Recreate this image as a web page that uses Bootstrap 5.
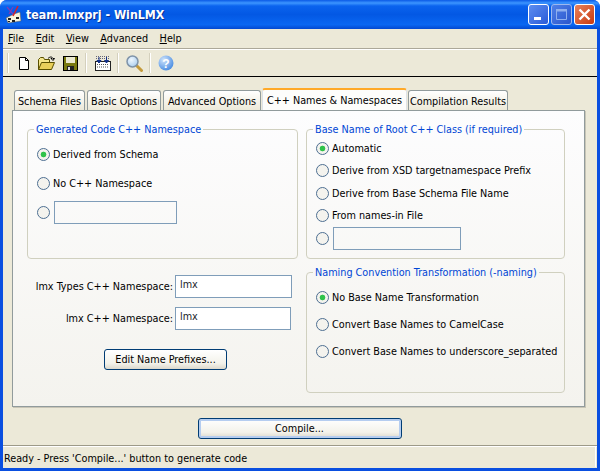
<!DOCTYPE html>
<html lang="en">

<head>
    <meta charset="UTF-8">
    <title>team.lmxprj - WinLMX</title>
    <link href="https://cdn.jsdelivr.net/npm/bootstrap@5.3.2/dist/css/bootstrap.min.css" rel="stylesheet">
    <style>
        html, body { height: 471px; overflow: hidden; }
        body { background: #fff; font: 10.75px/13px "DejaVu Sans Condensed", "DejaVu Sans", sans-serif; font-stretch: condensed; color: #000; }
        .xp-window { width: 600px; height: 471px; background: #0a4fe0; border-radius: 7px 7px 0 0; overflow: hidden; }
        .xp-title { height: 29px; padding: 0 5px; color: #fff;
            background: linear-gradient(180deg, #0a5ae6 0, #3c95ff 3px, #0a63ee 6px, #0358e4 50%, #0a67f2 85%, #0348d0 100%); }
        .xp-title-text { font: bold 12.3px "DejaVu Sans Condensed", "DejaVu Sans", sans-serif; font-stretch: condensed; text-shadow: 1px 1px 0 #0a2f90; }
        .xp-ctls { column-gap: 2px; }
        .xp-ctl { width: 21px; height: 21px; border: 1px solid #fff; border-radius: 3px; display: block; }
        .xp-ctl-min { background: linear-gradient(135deg, #5c8df0, #2a5bd8); }
        .xp-ctl-max { background: linear-gradient(135deg, #4f80e8, #2a56cc); border-color: #9db8ee; }
        .xp-ctl-close { background: linear-gradient(135deg, #e8825c, #c8390f); }
        .xp-body { margin: 0 3px 3px 3px; background: #ece9d8; height: 439px; }
        .xp-menu { height: 20px; border-bottom: 1px solid #aca899; box-shadow: 0 1px 0 #fff; }
        .xp-menu span { padding: 0 6.5px 0 5px; }
        .xp-menu u { text-underline-offset: 1px; }
        .xp-toolbar { height: 28px; padding-left: 4px; border-bottom: 1px solid #000; padding-top: 1px; }
        .xp-sep { width: 2px; height: 20px; background: #d4d0bd; border-right: 1px solid #fff; }
        .xp-tool-a { margin-left: 8px; }
        .xp-tool-b { margin-left: 7px; }
        .xp-sep.xp-tool-c { margin-left: 6px; }
        .xp-tabs { padding: 13px 0 0 11px; height: 33px; border: 0; }
        .xp-tabs .nav-link { height: 20px; margin: 0 2px 0 0; padding: 4px 0 0; text-align: center; color: #000; font-size: 10.75px; line-height: 13px; white-space: nowrap;
            background: linear-gradient(180deg, #fff, #ece9d8); border: 1px solid #919b9c; border-bottom: 0; border-radius: 3px 3px 0 0; }
        .xp-tabs .nav-link.active { height: 22px; margin: -2px 1px 0 -1px; padding: 4px 0 0; background: #fdfdfb; position: relative; z-index: 2;
            border-top: 2px solid #ffa928; color: #000; }
        .xp-tab-schema { width: 71px; }
        .xp-tab-basic { width: 74px; }
        .xp-tab-adv { width: 98px; }
        .xp-tab-cpp { width: 145px; }
        .xp-tab-comp { width: 100px; }
        .xp-panel { margin-left: 9px; width: 573px; height: 297px; border: 1px solid #919b9c; box-shadow: 1px 1px 0 #c8c5b6; column-gap: 8px;
            background: linear-gradient(180deg, #fdfdfe, #f4f3ee); padding: 12px 0 0 14px; }
        .xp-left { width: 271px; }
        .xp-right { width: 259px; }
        .xp-group { border: 1px solid #d0d0bf; border-radius: 4px; margin: 0; padding: 0; height: 136px; }
        .xp-group legend { float: none; width: auto; font-size: 10.75px; line-height: 13px; margin: 0 0 0 6px; padding: 0 2px; color: #0046d5; }
        .xp-group-naming { height: 127px; margin-top: 7px; }
        .xp-rows-ns { padding: 4px 0 0 9px; }
        .xp-rows-base { padding: 1px 0 0 9px; }
        .xp-rows-conv { padding: 4px 0 0 9px; }
        .xp-radio-row { height: 22.5px; }
        .xp-rows-ns .xp-radio-row { height: 29px; }
        .xp-rows-conv .xp-radio-row { height: 27px; }
        .xp-rows-conv .xp-radio-row:first-child { height: 28px; }
        .xp-radio { width: 13px; height: 13px; margin: 0 3px 0 0; flex: none; border: 1px solid #4e6f92; background-color: #f4f3ee; }
        .xp-radio:checked { background: radial-gradient(circle, #2fc24a 0 2.5px, #f4f3ee 3.2px); border-color: #4e6f92; }
        .xp-input { height: 23px; border: 1px solid #7f9db9; border-radius: 0; padding: 0 4px 4px; font-size: 10.75px; background: #fff; box-shadow: none; }
        .xp-radio + .xp-input { background: transparent; margin-left: 1px; }
        .xp-w123 { width: 123px; }
        .xp-w128 { width: 128px; }
        .xp-w117 { width: 117px; }
        .xp-w116 { width: 116px; }
        .xp-field { margin-top: 9px; }
        .xp-field-first { margin-top: 16px; }
        .xp-btn { border: 1px solid #003c74; border-radius: 3px; font-size: 10.75px; padding: 1px 0 0; color: #000; height: 21px;
            background: linear-gradient(180deg, #fff, #f3f2ea 70%, #dcd8cc); }
        .xp-btn-prefixes { width: 123px; margin: 19px 0 0 77px; }
        .xp-btn-compile { width: 204px; box-shadow: inset 0 0 0 2px #b5cdf0; }
        .xp-compile-row { padding: 11px 1px 0 0; height: 38px; }
        .xp-label { width: 148px; text-align: right; padding-right: 2px; }
        .xp-status { height: 22px; border-top: 1px solid #9d9a88; box-shadow: inset 0 1px 0 #fff; padding: 6px 0 0 1px; }
        .xp-status-pane { border-right: 1px solid #fff; height: 20px; margin: -5px 1px 0 0; padding-top: 5px; }
    </style>
</head>

<body>
    <div class="xp-window">
        <!-- Title bar -->
        <div class="xp-title d-flex align-items-center">
            <svg width="17" height="18" viewBox="0 0 17 18" class="me-1 flex-shrink-0">
                <path d="M1 12 L9 8 L15 6 L16 15 L3 17 Z" fill="#f7f3dc" stroke="#555" stroke-width=".5"/>
                <path d="M3 12h3v2H3zM7 14h3v2H7zM3 15h2v1H3zM11 11h3v2h-3z" fill="#222"/>
                <path d="M2 1 L8 8 M8 1 L4 8" stroke="#7a3fb8" stroke-width="1.3" fill="none"/>
                <path d="M13 0 L8 10" stroke="#d8202a" stroke-width="1.5"/>
            </svg>
            <span class="xp-title-text flex-grow-1">team.lmxprj - WinLMX</span>
            <div class="d-flex xp-ctls">
                <svg class="xp-ctl xp-ctl-min" viewBox="0 0 19 19"><rect x="5" y="12" width="7" height="3" fill="#fff"/></svg>
                <svg class="xp-ctl xp-ctl-max" viewBox="0 0 19 19"><path d="M4.5 4.5h10v10h-10z" fill="none" stroke="#8fb0ee"/><rect x="4" y="4" width="11" height="2.5" fill="#8fb0ee"/></svg>
                <svg class="xp-ctl xp-ctl-close" viewBox="0 0 19 19"><path d="M4.5 4.5l10 10M14.5 4.5l-10 10" stroke="#fff" stroke-width="2.4"/></svg>
            </div>
        </div>

        <div class="xp-body d-flex flex-column">
            <!-- Menu -->
            <div class="xp-menu d-flex align-items-center">
                <span><u>F</u>ile</span><span><u>E</u>dit</span><span><u>V</u>iew</span><span><u>A</u>dvanced</span><span><u>H</u>elp</span>
            </div>

            <!-- Toolbar -->
            <div class="xp-toolbar d-flex align-items-center">
                <div class="xp-sep"></div>
                <svg class="xp-tool-a" width="14" height="15" viewBox="0 0 14 15"><path d="M2.5 1.5h6l3 3v9h-9z" fill="#fff" stroke="#000"/><path d="M8.5 1.5v3h3" fill="none" stroke="#000"/></svg>
                <svg class="xp-tool-b" width="18" height="15" viewBox="0 0 18 15"><path d="M.5 13.5v-10l2-2h3l1 2h5v3" fill="#f4e58a" stroke="#5a5000"/><path d="M.5 13.5l3-7h13l-3 7z" fill="#e8cf5a" stroke="#5a5000"/><path d="M10 2.5c2-2 4-2 5 0l1.5 0-1.5 2-2-2h1" fill="none" stroke="#000"/></svg>
                <svg class="xp-tool-b" width="15" height="15" viewBox="0 0 15 15"><rect x=".5" y=".5" width="14" height="14" fill="#7a7a10" stroke="#000"/><rect x="3" y="1" width="9" height="6" fill="#ecead0"/><rect x="4" y="10" width="7" height="4" fill="#222"/><rect x="5" y="11" width="2" height="3" fill="#ddd"/></svg>
                <div class="xp-sep xp-tool-b"></div>
                <svg class="xp-tool-a" width="16" height="15" viewBox="0 0 16 15"><rect x=".5" y="5.5" width="15" height="9" fill="#fff" stroke="#222"/><path d="M2 8.5h12M2 11h12" stroke="#555" stroke-dasharray="1 1"/><path d="M1 .5h14M1 2.5h14" stroke="#667" stroke-dasharray="1 1"/><path d="M4 1v6M2 4.5l2 2.5 2-2.5zM11.500 1v6M9.500 4.500l2 2.500 2-2.500z" stroke="#12308a" fill="#12308a"/></svg>
                <div class="xp-sep xp-tool-c"></div>
                <svg class="xp-tool-b" width="17" height="17" viewBox="0 0 17 17"><defs><radialGradient id="lens" cx=".4" cy=".35" r=".7"><stop offset="0" stop-color="#eef7ff"/><stop offset="1" stop-color="#a9cdee"/></radialGradient></defs><path d="M10 10l5.500 5.500" stroke="#c49a3a" stroke-width="3" stroke-linecap="round"/><circle cx="6.500" cy="6.500" r="5.500" fill="url(#lens)" stroke="#7f93a8" stroke-width="1.500"/></svg>
                <div class="xp-sep xp-tool-c"></div>
                <svg class="xp-tool-b" width="16" height="16" viewBox="0 0 16 16"><defs><radialGradient id="hlp" cx=".35" cy=".3" r=".8"><stop offset="0" stop-color="#cfe3fb"/><stop offset="1" stop-color="#3f86e0"/></radialGradient></defs><circle cx="8" cy="8" r="7.5" fill="url(#hlp)"/><text x="8" y="12.5" text-anchor="middle" font-family="Liberation Sans" font-weight="700" font-size="12" fill="#fff">?</text></svg>
            </div>

            <!-- Tabs -->
            <ul class="nav nav-tabs xp-tabs">
                <li class="nav-item"><a class="nav-link xp-tab-schema" href="#">Schema Files</a></li>
                <li class="nav-item"><a class="nav-link xp-tab-basic" href="#">Basic Options</a></li>
                <li class="nav-item"><a class="nav-link xp-tab-adv" href="#">Advanced Options</a></li>
                <li class="nav-item"><a class="nav-link active xp-tab-cpp" href="#">C++ Names &amp; Namespaces</a></li>
                <li class="nav-item"><a class="nav-link xp-tab-comp" href="#">Compilation Results</a></li>
            </ul>

            <div class="xp-panel d-flex">
                <!-- Left column -->
                <div class="xp-left">
                    <fieldset class="xp-group">
                        <legend>Generated Code C++ Namespace</legend>
                        <div class="xp-rows-ns">
                            <div class="xp-radio-row d-flex align-items-center"><input type="radio" name="ns" class="form-check-input xp-radio" checked>Derived from Schema</div>
                            <div class="xp-radio-row d-flex align-items-center"><input type="radio" name="ns" class="form-check-input xp-radio">No C++ Namespace</div>
                            <div class="xp-radio-row d-flex align-items-center"><input type="radio" name="ns" class="form-check-input xp-radio"><input type="text" class="form-control xp-input xp-w123"></div>
                        </div>
                    </fieldset>
                    <div class="d-flex align-items-center xp-field-first"><div class="xp-label">lmx Types C++ Namespace:</div><input type="text" class="form-control xp-input xp-w117" value="lmx"></div>
                    <div class="d-flex align-items-center xp-field"><div class="xp-label">lmx C++ Namespace:</div><input type="text" class="form-control xp-input xp-w116" value="lmx"></div>
                    <button type="button" class="btn xp-btn xp-btn-prefixes">Edit Name Prefixes...</button>
                </div>

                <!-- Right column -->
                <div class="xp-right">
                    <fieldset class="xp-group">
                        <legend>Base Name of Root C++ Class (if required)</legend>
                        <div class="xp-rows-base">
                            <div class="xp-radio-row d-flex align-items-center"><input type="radio" name="base" class="form-check-input xp-radio" checked>Automatic</div>
                            <div class="xp-radio-row d-flex align-items-center"><input type="radio" name="base" class="form-check-input xp-radio">Derive from XSD targetnamespace Prefix</div>
                            <div class="xp-radio-row d-flex align-items-center"><input type="radio" name="base" class="form-check-input xp-radio">Derive from Base Schema File Name</div>
                            <div class="xp-radio-row d-flex align-items-center"><input type="radio" name="base" class="form-check-input xp-radio">From names-in File</div>
                            <div class="xp-radio-row d-flex align-items-center"><input type="radio" name="base" class="form-check-input xp-radio"><input type="text" class="form-control xp-input xp-w128"></div>
                        </div>
                    </fieldset>
                    <fieldset class="xp-group xp-group-naming">
                        <legend>Naming Convention Transformation (-naming)</legend>
                        <div class="xp-rows-conv">
                            <div class="xp-radio-row d-flex align-items-center"><input type="radio" name="conv" class="form-check-input xp-radio" checked>No Base Name Transformation</div>
                            <div class="xp-radio-row d-flex align-items-center"><input type="radio" name="conv" class="form-check-input xp-radio">Convert Base Names to CamelCase</div>
                            <div class="xp-radio-row d-flex align-items-center"><input type="radio" name="conv" class="form-check-input xp-radio">Convert Base Names to underscore_separated</div>
                        </div>
                    </fieldset>
                </div>
            </div>

            <div class="d-flex justify-content-center xp-compile-row">
                <button type="button" class="btn xp-btn xp-btn-compile">Compile...</button>
            </div>

            <div class="xp-status"><div class="xp-status-pane">Ready - Press 'Compile...' button to generate code</div></div>
        </div>
    </div>

    <script src="https://cdn.jsdelivr.net/npm/bootstrap@5.3.2/dist/js/bootstrap.bundle.min.js"></script>
</body>

</html>
